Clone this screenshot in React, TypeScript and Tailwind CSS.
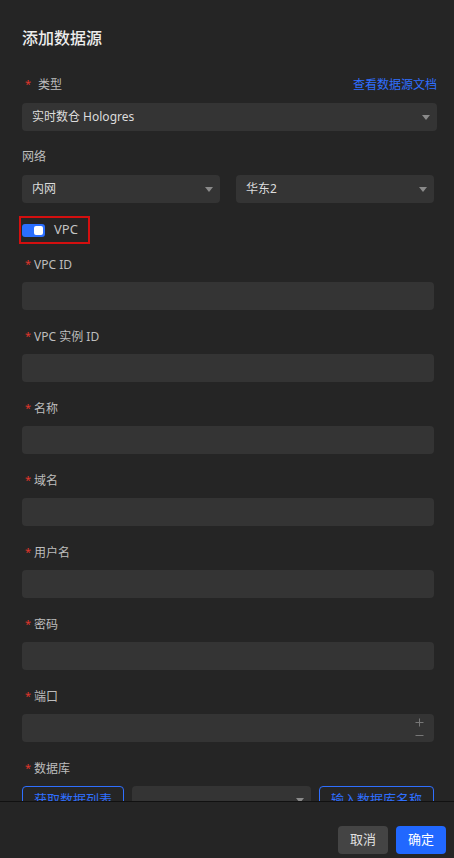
import { ReactNode } from 'react';

const font = { fontFamily: '"Noto Sans", "Noto Sans CJK SC", sans-serif' };

function Caret() {
  return (
    <svg width="8" height="5" viewBox="0 0 8 5" className="shrink-0">
      <path d="M0 0h8L4 5z" fill="#8a8a8a" />
    </svg>
  );
}

function Label({ children, spaced }: { children: ReactNode; spaced?: boolean }) {
  return (
    <div className="flex items-center h-5 text-[12px] text-[#bdbdbd]">
      <span className={`text-[#e0352b] text-[11px] leading-none ml-[3px] ${spaced ? 'mr-[7px]' : 'mr-[3px]'} -mt-[3px]`}>*</span>
      <span>{children}</span>
    </div>
  );
}

function Select({ value, className = '' }: { value?: string; className?: string }) {
  return (
    <div className={`h-7 rounded-[4px] bg-[#343434] flex items-center justify-between pl-[10px] pr-[7px] text-[12px] text-[#dcdcdc] ${className}`}>
      <span>{value}</span>
      <Caret />
    </div>
  );
}

function Field({ label }: { label: string }) {
  return (
    <div className="mb-[17px] mr-[3px]">
      <Label>{label}</Label>
      <div className="mt-[7px] h-7 rounded-[4px] bg-[#343434]" />
    </div>
  );
}

export default function App() {
  return (
    <div className="h-[858px] w-[454px] flex flex-col bg-[#252525] overflow-hidden" style={font}>
      <div className="flex-1 min-h-0 overflow-hidden pl-[22px] pr-[17px]">
        <h1 className="pt-[27px] text-[16px] leading-[22px] font-medium text-[#ececec]">添加数据源</h1>

        <div className="mt-[26px] flex items-center justify-between">
          <Label spaced>类型</Label>
          <a className="text-[12px] text-[#2f6fff]">查看数据源文档</a>
        </div>
        <Select value="实时数仓 Hologres" className="mt-[8px]" />

        <div className="mt-[16px] h-5 flex items-center text-[12px] text-[#bdbdbd]">网络</div>
        <div className="mt-[8px] mr-[3px] flex gap-4">
          <Select value="内网" className="flex-1" />
          <Select value="华东2" className="flex-1" />
        </div>

        <div className="mt-[13px] -ml-[3px] w-[71px] h-[28px] border-2 border-[#d40f0f] flex items-center pl-[1px] gap-[9px]">
          <div className="w-[23px] h-[13px] rounded-[3px] bg-[#2a6eff] flex items-center justify-end pr-[2px]">
            <div className="w-[9px] h-[9px] rounded-[2px] bg-white" />
          </div>
          <span className="text-[13px] text-[#c4c4c4]">VPC</span>
        </div>

        <div className="mt-[11px]">
          <Field label="VPC ID" />
          <Field label="VPC 实例 ID" />
          <Field label="名称" />
          <Field label="域名" />
          <Field label="用户名" />
          <Field label="密码" />
          <div className="mb-[17px] mr-[3px]">
            <Label>端口</Label>
            <div className="mt-[7px] h-7 rounded-[4px] bg-[#343434] flex justify-end items-center pr-[10px]">
              <svg width="9" height="20" viewBox="0 0 9 20" stroke="#777" strokeWidth="1">
                <path d="M0.5 4.5h8M4.5 0.5v8M0.5 17.5h8" />
              </svg>
            </div>
          </div>
          <div className="mr-[3px]">
            <Label>数据库</Label>
            <div className="mt-[7px] flex gap-2">
              <button className="h-7 w-[102px] rounded-[4px] border border-[#2f6fff] text-[13px] text-[#2f6fff]">获取数据列表</button>
              <Select className="flex-1" />
              <button className="h-7 w-[115px] rounded-[4px] border border-[#2f6fff] text-[13px] text-[#2f6fff]">输入数据库名称</button>
            </div>
          </div>
        </div>
      </div>

      <footer className="h-[57px] shrink-0 border-t border-[#111111] flex items-start justify-end gap-2 pt-6 pr-2">
        <button className="h-7 w-[50px] rounded-[4px] bg-[#444444] text-[13px] text-[#e0e0e0]">取消</button>
        <button className="h-7 w-[50px] rounded-[4px] bg-[#2168ff] text-[13px] text-white">确定</button>
      </footer>
    </div>
  );
}
